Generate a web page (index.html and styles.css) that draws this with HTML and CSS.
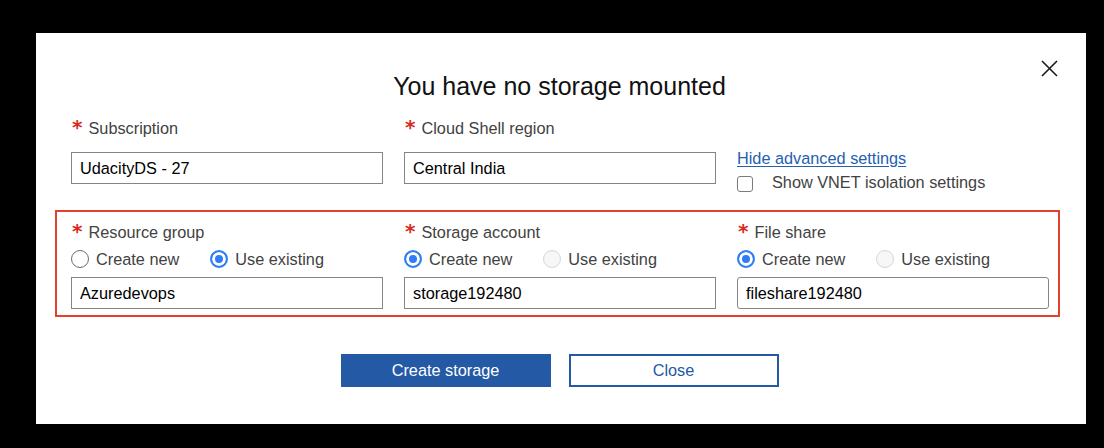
FILE: index.html
```html
<!DOCTYPE html>
<html lang="en">
<head>
<meta charset="utf-8">
<title>Cloud Shell storage</title>
<link rel="stylesheet" href="styles.css">
</head>
<body>
<div class="dialog">
  <button class="close" aria-label="Close">
    <svg width="17" height="17" viewBox="0 0 17 17"><path d="M1 1 L16 16 M16 1 L1 16" stroke="#1a1a1a" stroke-width="1.6" fill="none"/></svg>
  </button>
  <h1 class="title">You have no storage mounted</h1>
  <div class="row row-top">
    <div class="field">
      <label class="label"><span class="req">*</span>Subscription</label>
      <input class="text" type="text" value="UdacityDS - 27">
    </div>
    <div class="field">
      <label class="label"><span class="req">*</span>Cloud Shell region</label>
      <input class="text" type="text" value="Central India">
    </div>
    <div class="field advanced">
      <a class="link" href="#">Hide advanced settings</a>
      <label class="check"><input type="checkbox"><span>Show VNET isolation settings</span></label>
    </div>
  </div>
  <div class="storage-box">
    <div class="row">
      <div class="field">
        <label class="label label-box"><span class="req">*</span>Resource group</label>
        <div class="radios">
          <label class="radio"><input type="radio" name="rg">Create new</label>
          <label class="radio"><input type="radio" name="rg" checked>Use existing</label>
        </div>
        <input class="text" type="text" value="Azuredevops">
      </div>
      <div class="field">
        <label class="label label-box"><span class="req">*</span>Storage account</label>
        <div class="radios">
          <label class="radio"><input type="radio" name="sa" checked>Create new</label>
          <label class="radio"><input type="radio" name="sa" disabled>Use existing</label>
        </div>
        <input class="text" type="text" value="storage192480">
      </div>
      <div class="field">
        <label class="label label-box"><span class="req">*</span>File share</label>
        <div class="radios">
          <label class="radio"><input type="radio" name="fs" checked>Create new</label>
          <label class="radio"><input type="radio" name="fs" disabled>Use existing</label>
        </div>
        <input class="text text-round" type="text" value="fileshare192480">
      </div>
    </div>
  </div>
  <div class="actions">
    <button class="btn primary">Create storage</button>
    <button class="btn secondary">Close</button>
  </div>
</div>
</body>
</html>
```
FILE: styles.css
```css
* { box-sizing: border-box; }
html, body { background: #000; }
body {
  margin: 0;
  width: 1104px;
  height: 448px;
  overflow: hidden;
  font-family: "Liberation Sans", Arial, sans-serif;
  font-size: 16.3px;
}
.dialog {
  position: relative;
  margin: 33px 0 0 36px;
  width: 1050px;
  height: 391px;
  background: #fff;
  padding-top: 38px;
  overflow: hidden;
}
.close {
  position: absolute;
  top: 27px;
  left: 1005px;
  width: 17px;
  height: 17px;
  padding: 0;
  border: none;
  background: none;
  line-height: 0;
}
.title {
  margin: 0;
  height: 30px;
  line-height: 30px;
  font-size: 25px;
  font-weight: normal;
  color: #111;
  text-align: center;
  padding-right: 3px;
}
.row {
  display: grid;
  grid-template-columns: repeat(3, 312px);
  column-gap: 21px;
}
.row-top { margin: 17px 0 0 35px; }
.label {
  display: block;
  height: 20px;
  line-height: 20px;
  color: #424242;
  margin-bottom: 14px;
  white-space: nowrap;
}
.label-box { margin-bottom: 7px; }
.req {
  color: #d9291c;
  font-family: "DejaVu Sans", sans-serif;
  font-weight: bold;
  font-size: 20px;
  line-height: 0;
  margin: 0 6px 0 1px;
}
.text {
  display: block;
  width: 312px;
  height: 32px;
  margin: 0;
  padding: 0 8px;
  border: 1px solid #858585;
  border-radius: 0;
  background: #fff;
  color: #000;
  font: 16.3px "Liberation Sans", Arial, sans-serif;
  outline: none;
}
.text-round { border-radius: 3px; }
.advanced { padding-top: 30px; }
.link {
  display: block;
  height: 20px;
  line-height: 20px;
  color: #2560b2;
  text-decoration: underline;
  text-underline-offset: 2px;
}
.check {
  display: flex;
  align-items: center;
  height: 20px;
  margin-top: 4px;
  color: #424242;
}
.check input {
  appearance: none;
  width: 16px;
  height: 16px;
  margin: 3px 19px 0 0;
  border: 1px solid #7a7a7a;
  border-radius: 3px;
  background: #fff;
}
.storage-box {
  margin: 18px 0 0 19px;
  width: 1005px;
  border: 2px solid #e2412c;
  padding: 10px 9px 6px 14px;
}
.radios {
  display: flex;
  gap: 31px;
  height: 20px;
  margin-bottom: 8px;
}
.radio {
  display: flex;
  align-items: center;
  gap: 7px;
  color: #424242;
  white-space: nowrap;
}
.radio input {
  appearance: none;
  margin: 0;
  width: 18px;
  height: 18px;
  border-radius: 50%;
  border: 1px solid #6e6e6e;
  background: #fff;
}
.radio input:checked {
  border: 2px solid #2f7cf6;
  background: #2f7cf6;
  box-shadow: inset 0 0 0 3px #fff;
}
.radio input:disabled {
  border-color: #d6d6d6;
  background: #f7f7f7;
}
.actions {
  display: flex;
  justify-content: center;
  gap: 18px;
  margin-top: 37px;
  padding-right: 3px;
}
.btn {
  width: 210px;
  height: 33px;
  margin: 0;
  font: 16.3px "Liberation Sans", Arial, sans-serif;
  cursor: pointer;
}
.primary {
  background: #2359a5;
  color: #fff;
  border: none;
}
.secondary {
  background: #fff;
  color: #2359a5;
  border: 2px solid #2359a5;
}
```
